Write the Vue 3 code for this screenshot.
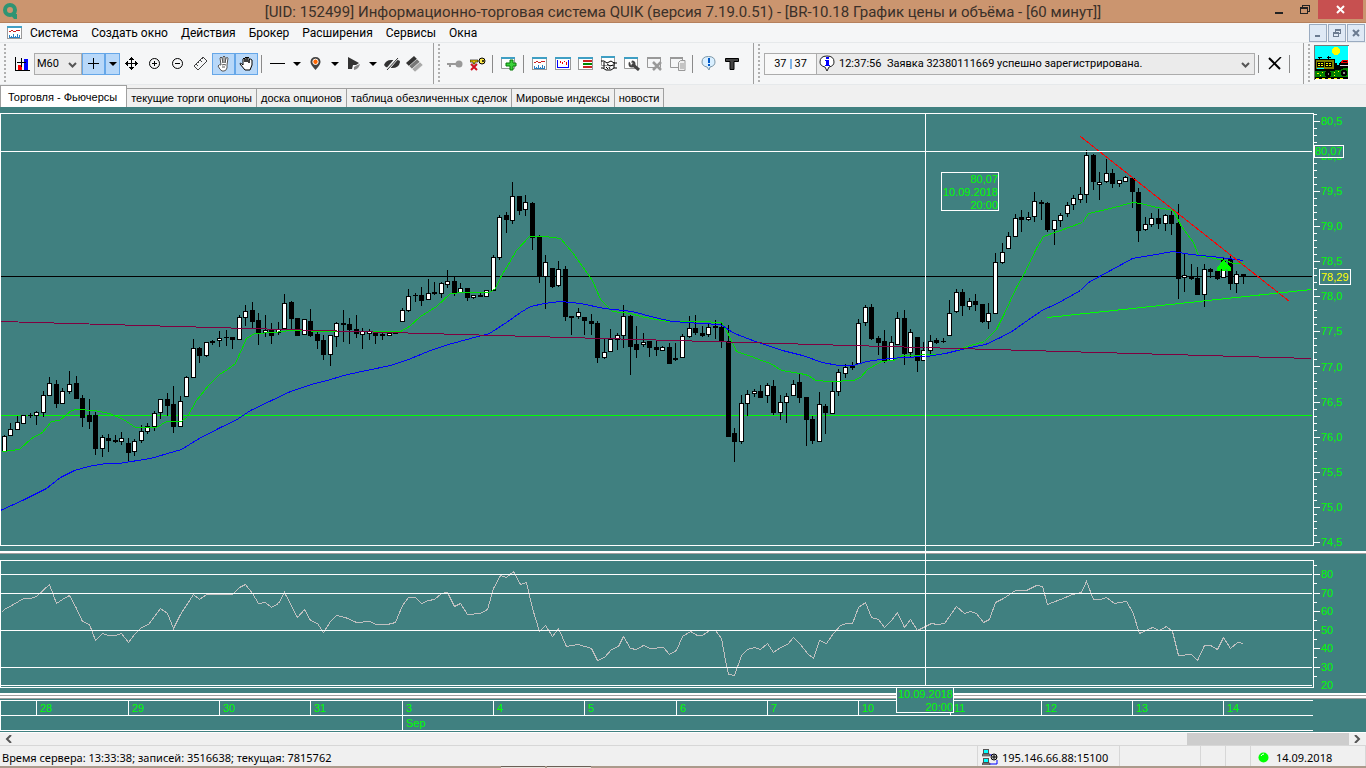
<!-- src/App.vue -->
<template>
  <div class="terminal">
    <header class="title-bar">
      <svg class="app-logo" width="18" height="18" viewBox="0 0 18 18">
        <circle cx="9" cy="8" r="5" fill="none" stroke="#2f9473" stroke-width="4" />
        <path d="M9 12h7v5h-3z" fill="#2f9473" />
      </svg>
      <h1>[UID: 152499] Информационно-торговая система QUIK (версия 7.19.0.51) - [BR-10.18 График цены и объёма - [60 минут]]</h1>
      <div class="window-buttons">
        <button class="win-btn" aria-label="Свернуть">
          <svg width="10" height="12"><path d="M1 8h8v2H1z" fill="#222" /></svg>
        </button>
        <button class="win-btn" aria-label="Восстановить">
          <svg width="12" height="12" fill="none" stroke="#222" shape-rendering="crispEdges"><path d="M1.5 3.5h7v6h-7zM1 4.500h8M3.500 3V1.500h7v6H9" /></svg>
        </button>
        <button class="win-btn win-close" aria-label="Закрыть">
          <svg width="10" height="10" stroke="#fff" stroke-width="2"><path d="M1 1l7 7M8 1l-7 7" /></svg>
        </button>
      </div>
    </header>

    <nav class="menu-bar">
      <svg width="15" height="13" viewBox="0 0 15 13" shape-rendering="crispEdges">
        <path d="M0 0h15v13H0z" fill="#999" /><path d="M1 2h13v10H1z" fill="#fff" /><path d="M0 0h15v2H0z" fill="#3f9fc4" />
        <path d="M2 5.500h2M4 4.500h2M6 5.500h3M9 4.500h4" stroke="#c22" fill="none" /><path d="M2 9h1v2H2zM4 10h1v1H4zM6 8h1v3H6zM8 10h1v1H8zM10 8h1v3h-1zM12 9h1v2h-1zM2 11h11v1H2z" fill="#2a7fc0" />
      </svg>
      <ul>
        <li v-for="item in menu" :key="item"><a href="#">{{ item }}</a></li>
      </ul>
      <div class="child-buttons">
        <button aria-label="Свернуть окно"><svg width="10" height="10"><path d="M2 7h5v2H2z" fill="#6b7b90" /></svg></button>
        <button aria-label="Восстановить окно"><svg width="10" height="10" fill="none" stroke="#6b7b90" shape-rendering="crispEdges"><path d="M1.500 4.500h5v4h-5zM1 5.500h6M3.500 4V1.500h5v4H7M3 2.500h6" /></svg></button>
        <button aria-label="Закрыть окно"><svg width="10" height="10" stroke="#6b7b90" stroke-width="2"><path d="M2 2l6 6M8 2l-6 6" /></svg></button>
      </div>
    </nav>

    <div class="toolbar">
      <div class="group group-chart">
        <button class="tb wide" aria-label="График">
          <svg width="16" height="16" viewBox="0 0 16 16" shape-rendering="crispEdges">
            <path d="M1.500 1v13.500h14.500" fill="none" stroke="#000" /><path d="M10 3h4v11h-4z" fill="#00f" /><path d="M4 9h4v5H4z" fill="#f00" />
            <path d="M3 6.500h9M7.500 2v9" stroke="#000" />
          </svg>
        </button>
        <div class="select-box interval">
          <select v-model="interval" aria-label="Интервал">
            <option>M60</option>
            <option>M30</option>
            <option>M15</option>
          </select>
          <svg class="chevron" width="9" height="6"><path d="M1 1l3.500 3.500L8 1" fill="none" stroke="#555" stroke-width="2" /></svg>
        </div>
        <button class="tb on" aria-label="Перекрестие">
          <svg width="13" height="13" shape-rendering="crispEdges"><path d="M1 6.500h11M6.500 1v11" stroke="#000" /></svg>
        </button>
        <button class="dd on" aria-label="Вид перекрестия"><svg width="8" height="4"><path d="M0 0h8L4 4z" /></svg></button>
        <button class="tb" aria-label="Перемещение">
          <svg width="13" height="13" viewBox="0 0 13 13" shape-rendering="crispEdges">
            <path d="M6.500 1v11M1 6.500h11" stroke="#000" /><path d="M6.500 0l3 3h-6zM6.500 13l3-3h-6zM0 6.500l3-3v6zM13 6.500l-3-3v6z" />
          </svg>
        </button>
        <button class="tb" aria-label="Увеличить">
          <svg width="13" height="13" viewBox="0 0 13 13"><circle cx="6.500" cy="6.500" r="5" fill="none" stroke="#000" /><path d="M4 6.500h5M6.500 4v5" stroke="#000" /></svg>
        </button>
        <button class="tb" aria-label="Уменьшить">
          <svg width="13" height="13" viewBox="0 0 13 13"><circle cx="6.500" cy="6.500" r="5" fill="none" stroke="#000" /><path d="M4 6.500h5" stroke="#000" /></svg>
        </button>
        <button class="tb" aria-label="Линейка">
          <svg width="15" height="15" viewBox="0 0 15 15"><path d="M1 10L10 1l4 4-9 9zM3 8l2 2M5 6l1 1M7 4l2 2M9 2l1 1" fill="none" stroke="#444" /></svg>
        </button>
        <button class="tb on" aria-label="Выбор">
          <svg width="13" height="17" viewBox="0 0 13 17">
            <path d="M4 10L3 3q1-2 2 0l1 5V2q1-2 2 0v6l1-5q2-1 2 0l-1 7v3q-1 3-3 3H5q-2-1-4-5 1-2 3-1z" fill="#fff" stroke="#555" />
            <path d="M5 10q2-1 4 0M5 12h3" fill="none" stroke="#555" />
          </svg>
        </button>
        <button class="tb on" aria-label="Рука">
          <svg width="15" height="15" viewBox="0 0 15 15">
            <path d="M4 9V3q1-2 2 0v3-4q1-2 2 0v4-4q1-2 2 0v5-3q1-2 3 0v5l-2 5H6L1 8q0-2 3 1z" fill="#fff" stroke="#000" />
          </svg>
        </button>
        <span class="sep"></span>
        <button class="tb" aria-label="Линия"><svg width="15" height="3"><path d="M0 1h15v1H0z" /></svg></button>
        <button class="dd" aria-label="Вид линии"><svg width="8" height="4"><path d="M0 0h8L4 4z" /></svg></button>
        <button class="tb" aria-label="Метка">
          <svg width="11" height="13" viewBox="0 0 11 13"><path d="M5.500 13Q0 7 .5 4.500 1 0 5.500 0t5 4.500Q11 7 5.500 13z" fill="#444" /><circle cx="5.500" cy="4.800" r="2.700" fill="#f60" stroke="#fff" /></svg>
        </button>
        <button class="dd" aria-label="Вид метки"><svg width="8" height="4"><path d="M0 0h8L4 4z" /></svg></button>
        <button class="tb" aria-label="Фигура">
          <svg width="14" height="14" viewBox="0 0 14 14"><path d="M1 0l11 6-3 2H6l-1 4H1z" fill="#333" /><path d="M7 13v-3q3-2 6-3-1 5-6 6z" fill="#888" /></svg>
        </button>
        <button class="dd" aria-label="Вид фигуры"><svg width="8" height="4"><path d="M0 0h8L4 4z" /></svg></button>
        <button class="tb" aria-label="Скрыть">
          <svg width="16" height="14" viewBox="0 0 16 14">
            <path d="M0 8q2-5 7-5h3L4 11Q1 10 0 8z" fill="#333" /><path d="M16 5q-1 6-8 6H6l7-8q3 0 3 2z" fill="#333" /><path d="M14 0L2 14" stroke="#f5f6f7" stroke-width="3" /><path d="M14 1L3 13" stroke="#333" />
          </svg>
        </button>
        <button class="tb" aria-label="Слои">
          <svg width="17" height="16" viewBox="0 0 17 16"><path d="M0 7l8-7 3 3-8 7z" fill="#333" /><path d="M3 10l8-7 3 3-8 7z" fill="#777" stroke="#f5f6f7" stroke-width=".5" /><path d="M6 13l8-7 3 3-8 7z" fill="#aaa" stroke="#f5f6f7" stroke-width=".5" /></svg>
        </button>
      </div>

      <div class="group group-tools">
        <button class="tb" aria-label="Соединить">
          <svg width="16" height="10" viewBox="0 0 16 10"><circle cx="12" cy="5" r="3.500" fill="#999" /><path d="M0 4h9v2H4v2H2V6H0z" fill="#999" /></svg>
        </button>
        <button class="tb" aria-label="Разъединить">
          <svg width="16" height="14" viewBox="0 0 16 14">
            <circle cx="12" cy="4" r="3" fill="#ffe94a" stroke="#000" /><path d="M0 3h8v2H5v2H3V5H0z" fill="#e8c800" stroke="#000" stroke-width=".6" /><circle cx="13" cy="4" r="1" />
            <path d="M1 7l6 6M7 7l-6 6" stroke="#d01020" stroke-width="2" />
          </svg>
        </button>
        <span class="sep"></span>
        <button class="tb" aria-label="Создать окно">
          <svg width="16" height="14" viewBox="0 0 16 14">
            <path d="M.5.500h13v11H.5z" fill="#fff" stroke="#999" /><path d="M0 0h14v2H0z" fill="#3f9fc4" /><path d="M9 3h3v3h3v3h-3v4H9V9H5V6h4z" fill="#3bd23b" stroke="#087a08" />
          </svg>
        </button>
        <span class="sep"></span>
        <button class="tb" aria-label="График цены">
          <svg width="15" height="13" viewBox="0 0 15 13" shape-rendering="crispEdges">
            <path d="M0 0h15v13H0z" fill="#999" /><path d="M1 2h13v10H1z" fill="#fff" /><path d="M0 0h15v2H0z" fill="#3f9fc4" />
            <path d="M2 5.500h2M4 4.500h2M6 5.500h3M9 4.500h4" stroke="#c22" fill="none" /><path d="M2 9h1v2H2zM4 10h1v1H4zM6 8h1v3H6zM8 10h1v1H8zM10 8h1v3h-1zM12 9h1v2h-1zM2 11h11v1H2z" fill="#2a7fc0" />
          </svg>
        </button>
        <button class="tb" aria-label="Диаграмма">
          <svg width="16" height="13" viewBox="0 0 16 13" shape-rendering="crispEdges">
            <path d="M0 0h16v13H0z" fill="#999" /><path d="M1 2h14v10H1z" fill="#fff" /><path d="M0 0h16v2H0z" fill="#3f9fc4" />
            <path d="M2.500 3v7.500h11V3" fill="none" stroke="#00f" /><path d="M5.500 4v2M7.500 5v2M9.500 4v1M11.500 5v3" stroke="#e00" />
          </svg>
        </button>
        <button class="tb" aria-label="Стакан">
          <svg width="15" height="13" viewBox="0 0 15 13" shape-rendering="crispEdges">
            <path d="M0 0h15v13H0z" fill="#999" /><path d="M1 2h13v10H1z" fill="#fff" /><path d="M0 0h15v2H0z" fill="#3f9fc4" />
            <path d="M5 3h9v2H5zM5 9h9v2H5z" fill="#c22" /><path d="M5 6h9v2H5z" fill="#080" />
          </svg>
        </button>
        <button class="tb" aria-label="Сделки">
          <svg width="16" height="15" viewBox="0 0 16 15">
            <path d="M.5.500h13v9H.5z" fill="#fff" stroke="#999" /><path d="M0 0h14v2H0z" fill="#3f9fc4" />
            <path d="M0 5h3l3 2 4-2 3 2h3M0 12h2l3 2h5l3-2h3M3 6v6M13 6v6M6 8l3 2 3-1M5 11l2 2M8 11l1 2" fill="none" stroke="#000" />
          </svg>
        </button>
        <button class="tb" aria-label="Настройка">
          <svg width="16" height="14" viewBox="0 0 16 14">
            <path d="M.5.500h13v11H.5z" fill="#fff" stroke="#999" /><path d="M0 0h14v2H0z" fill="#3f9fc4" /><path d="M8 7l7 6" stroke="#444" stroke-width="3" /><circle cx="8" cy="7" r="2.500" fill="none" stroke="#444" stroke-width="2" /><path d="M4 3h4l-1 4z" fill="#fff" />
          </svg>
        </button>
        <button class="tb" aria-label="Удалить">
          <svg width="16" height="14" viewBox="0 0 16 14"><path d="M.5 1.500h13v9H.5z" fill="none" stroke="#999" /><path d="M0 0h14v2H0z" fill="#999" /><path d="M6 5l8 8M14 5l-8 8" stroke="#999" stroke-width="2.500" /></svg>
        </button>
        <button class="tb" aria-label="Таблица">
          <svg width="16" height="14" viewBox="0 0 16 14"><path d="M.5 1.500h12v9H.5z" fill="none" stroke="#999" /><path d="M0 0h13v2H0z" fill="#999" /><path d="M8.500 5.500l2-2h4.500v10H8.500z" fill="#eee" stroke="#999" /><path d="M10 7h4M10 9h4M10 11h4" stroke="#999" /></svg>
        </button>
        <span class="sep"></span>
        <button class="tb" aria-label="Сообщение">
          <svg width="15" height="15" viewBox="0 0 15 15"><path d="M7.500.500q6.500 0 6.500 5.500 0 4-5 5l-1 3-2-3Q1 10 1 6 1 .5 7.500.500z" fill="#d9efff" stroke="#7c97a8" /><path d="M7 2h2v5H7zM7 8h2v2H7z" fill="#0058c8" /></svg>
        </button>
        <button class="tb" aria-label="Текст">
          <svg width="14" height="12" viewBox="0 0 14 12"><path d="M.5.500h13v3H9v8H5v-8H.5z" fill="#444" stroke="#000" /></svg>
        </button>
      </div>

      <div class="group group-message">
        <div class="counter">37<i></i>37</div>
        <div class="select-box message">
          <svg class="info" width="17" height="17" viewBox="0 0 17 17">
            <path d="M8 1q7 0 7 6 0 4-5 5l-2 4-2-4Q1 11 1 7q0-6 7-6z" fill="#fff" stroke="#222" /><path d="M7 2h3v2H7zM6 5h4v5h1v1H6v-1h1V6H6z" fill="#00f" />
          </svg>
          <select aria-label="Сообщения">
            <option>12:37:56&nbsp; Заявка 32380111669 успешно зарегистрирована.</option>
          </select>
          <svg class="chevron" width="9" height="6"><path d="M1 1l3.500 3.500L8 1" fill="none" stroke="#555" stroke-width="2" /></svg>
        </div>
        <span class="sep"></span>
        <button class="tb" aria-label="Очистить">
          <svg width="14" height="13" viewBox="0 0 14 13"><path d="M1 1l11 11" stroke="#000" stroke-width="2" /><path d="M13 0L1 12" stroke="#000" stroke-width="1.500" /></svg>
        </button>
        <span class="sep"></span>
      </div>

      <div class="group group-logo">
        <svg class="caravan" width="35" height="35" viewBox="0 0 35 35" shape-rendering="crispEdges">
          <path d="M0 0h35v35H0z" fill="#fff" /><path d="M0 0h35v1H1v34H0z" fill="#777" />
          <path d="M1 1h33v20H1z" fill="#0ff" /><path d="M1 22h33v12H1z" fill="#008000" />
          <circle cx="22" cy="6" r="4" fill="#ff0" />
          <path d="M1 14h20v12H1z" fill="#000" /><path d="M2 15h18v9H2z" fill="#808000" />
          <path d="M3 17h7v5H3zM11 17h7v5h-7z" fill="#000" /><path d="M4 18h2v1H4zM7 18h2v1H7zM4 20h2v1H4zM7 20h2v1H7zM12 18h2v1h-2zM15 18h2v1h-2zM12 20h2v1h-2zM15 20h2v1h-2z" fill="#ff0" />
          <path d="M3 23h7v1H3z" fill="#0ff" /><path d="M4 12h4v1H4zM5 13h1v1H5zM13 12h4v1h-4zM14 11h1v3H14z" />
          <path d="M21 18h2v2h2v-2l3-3h6v8h-4l-4 2h-5z" fill="#000" /><path d="M28 15h6v3h-7z" fill="#e00" /><path d="M29 16h4v1h-4z" fill="#000" /><path d="M26 20h8v1h-8z" fill="#ddd" />
          <circle cx="14" cy="29" r="3" /><circle cx="30" cy="28" r="3" /><path d="M14 28h1v2h-1zM29 27h2v2h-2z" fill="#888" />
          <path d="M3 28h2v1H3zM8 27h1v1H8zM6 30h1v1H6zM20 30h1v1h-1zM24 26h1v1h-1zM20 27h1v1h-1z" fill="#ff0" />
          <path d="M1 32h33v2H1z" /><path d="M2 33h3v1H2zM8 33h3v1H8zM14 33h3v1h-3zM20 33h3v1h-3zM26 33h3v1h-3z" fill="#ff0" />
        </svg>
      </div>
    </div>

    <div class="tabs" role="tablist">
      <button
        v-for="(tab, i) in tabs"
        :key="tab"
        role="tab"
        :aria-selected="i === activeTab"
        :class="{ active: i === activeTab }"
        @click="activeTab = i"
      >{{ tab }}</button>
    </div>

    <main class="charts">
      <section class="panel price-panel">
        <svg class="plot" viewBox="0 113 1314 433" preserveAspectRatio="none" shape-rendering="crispEdges">
          <rect x="0" y="276" width="1312" height="1" fill="#000" />
          <rect x="0" y="415" width="1312" height="1" fill="#00ff00" />
          <g v-for="(c, i) in candles" :key="i">
            <rect :x="candleX(i)" :y="c[0]" width="1" :height="c[3] - c[0]" fill="#000" />
            <rect :x="candleX(i) - 2" :y="c[1]" width="5" :height="c[2] - c[1]" fill="#000" />
            <rect v-if="c[4]" :x="candleX(i) - 1" :y="c[1] + 1" width="3" :height="c[2] - c[1] - 2" fill="#fff" />
          </g>
          <g fill="none" transform="translate(.5 .5)">
            <polyline :points="maFast" stroke="#00e000" />
            <polyline :points="maSlow" stroke="#0000ff" />
            <path d="M0 321L1311 358" stroke="#800040" />
            <path d="M1080 136L1289 301" stroke="#ff0000" />
            <path d="M1047 317L1311 289" stroke="#00ff00" />
          </g>
          <path d="M1223 260h1l7 8v3h-4v-2h-1v2h-4v-2h-1v2h-4v-3z" fill="#00ff00" />
          <rect x="0" y="151" width="1312" height="1" fill="#fff" />
        </svg>
        <div class="axis">
          <svg viewBox="0 113 52 433" preserveAspectRatio="none" shape-rendering="crispEdges">
            <rect v-for="n in 62" :key="n" x="0" :y="Math.round(107 + n * 7.013)" :width="n % 5 === 2 ? 6 : 3" height="1" fill="#fff" />
          </svg>
          <ul class="price-labels">
            <li v-for="p in priceLabels" :key="p">{{ p }}</li>
          </ul>
          <span class="mark cursor-mark">80,07</span>
          <span class="mark last-mark">78,29</span>
        </div>
        <div class="tip cursor-tip">80,07<br>10.09.2018<br>20:00</div>
      </section>

      <div class="splitter"></div>

      <section class="panel rsi-panel">
        <svg class="plot" viewBox="0 560 1314 128" preserveAspectRatio="none" shape-rendering="crispEdges">
          <polyline :points="rsi" fill="none" stroke="#c0c0c0" transform="translate(.5 .5)" />
          <rect v-for="y in [574, 593, 630, 667, 685]" :key="y" x="0" :y="y" width="1312" height="1" fill="#fff" />
        </svg>
        <div class="axis">
          <svg viewBox="0 560 52 128" preserveAspectRatio="none" shape-rendering="crispEdges">
            <rect v-for="n in 13" :key="n" x="0" :y="Math.round(555.5 + n * 9.25)" :width="n % 2 ? 3 : 6" height="1" fill="#fff" />
          </svg>
          <ul class="rsi-labels">
            <li v-for="n in [80, 70, 60, 50, 40, 30, 20]" :key="n">{{ n }}</li>
          </ul>
        </div>
      </section>

      <div class="cross-line"></div>

      <div class="splitter"></div>
      <div class="splitter"></div>

      <section class="dates">
        <div class="days" :style="{ gridTemplateColumns: dayColumns }">
          <span v-for="d in days" :key="d.label">{{ d.label }}</span>
        </div>
        <div class="months">
          <span></span>
          <span>Sep</span>
        </div>
        <div class="tip time-tip">10.09.2018<br>20:00</div>
      </section>
    </main>

    <div class="hscroll">
      <button aria-label="Назад"><svg width="7" height="8"><path d="M6 0L2 4l4 4" fill="none" stroke="#555" stroke-width="2" /></svg></button>
      <div class="track"><div class="thumb"></div></div>
      <button aria-label="Вперёд"><svg width="7" height="8"><path d="M1 0l4 4-4 4" fill="none" stroke="#555" stroke-width="2" /></svg></button>
    </div>

    <footer class="status-bar">
      <span class="server-time">Время сервера: 13:33:38; записей: 3516638; текущая: 7815762</span>
      <span class="cell address">
        <svg width="17" height="16" viewBox="0 0 17 16">
          <path d="M1 0h6v5H1zM1 9h6v5H1z" fill="#555" /><path d="M2 1h4v3H2zM2 10h4v3H2z" fill="#0ff" /><path d="M0 5h8v2H0zM0 14h8v2H0z" fill="#888" stroke="#222" stroke-width=".5" />
          <path d="M8 6h4M8 15h7v-4" fill="none" stroke="#00f" /><circle cx="12" cy="8" r="3" fill="#ccc" stroke="#000" /><path d="M10 8h5M12 6v4" stroke="#000" />
        </svg>
        195.146.66.88:15100
      </span>
      <span class="cell blank"></span>
      <span class="cell small"></span>
      <span class="cell small"></span>
      <span class="cell date">
        <svg width="11" height="11"><circle cx="5.500" cy="5.500" r="5" fill="#00ff00" /><path d="M3 4q1-2 3-2" stroke="#fff" fill="none" /></svg>
        14.09.2018
      </span>
    </footer>
    <div class="desktop-edge"><i></i><i></i></div>
  </div>
</template>

<script setup>
import { ref, computed } from 'vue';

const menu = ['Система', 'Создать окно', 'Действия', 'Брокер', 'Расширения', 'Сервисы', 'Окна'];
const tabs = [
  'Торговля - Фьючерсы',
  'текущие торги опционы',
  'доска опционов',
  'таблица обезличенных сделок',
  'Мировые индексы',
  'новости'
];
const activeTab = ref(0);
const interval = ref('M60');

const priceLabels = [];
for (let p = 80.5; p >= 74.5; p -= 0.5) {
  priceLabels.push(p.toFixed(1).replace('.', ','));
}

const days = [
  { label: '', w: 36 }, { label: '28', w: 92 }, { label: '29', w: 91 }, { label: '30', w: 91 },
  { label: '31', w: 92 }, { label: '3', w: 91 }, { label: '4', w: 91 }, { label: '5', w: 92 },
  { label: '6', w: 91 }, { label: '7', w: 91 }, { label: '10', w: 92 }, { label: '11', w: 91 },
  { label: '12', w: 91 }, { label: '13', w: 91 }, { label: '14', w: 90 }
];
const dayColumns = computed(() => days.map(d => `minmax(0, ${d.w}fr)`).join(' '));

const candleX = (i) => Math.floor(4.3 + i * 6.521);

// high, body top, body bottom, low, 1 = rising
const candles = [
  [435, 436, 452, 452, 1], [423, 429, 436, 436, 1], [416, 422, 430, 430, 1], [415, 415, 424, 424, 1], [413, 415, 416, 418, 0],
  [411, 412, 416, 425, 1], [391, 395, 413, 417, 1], [377, 383, 396, 396, 1], [380, 384, 404, 408, 0], [388, 391, 404, 404, 1],
  [371, 384, 392, 394, 1], [376, 383, 399, 399, 0], [395, 398, 418, 427, 0], [399, 415, 422, 429, 0], [412, 415, 449, 455, 0],
  [435, 437, 449, 457, 1], [434, 438, 441, 452, 0], [435, 440, 442, 443, 0], [432, 438, 442, 445, 1], [438, 443, 453, 461, 0],
  [439, 441, 452, 456, 1], [425, 431, 441, 443, 1], [423, 426, 432, 434, 1], [411, 413, 427, 431, 1], [399, 399, 413, 419, 1],
  [393, 399, 406, 416, 0], [386, 404, 427, 433, 0], [396, 401, 427, 427, 1], [376, 377, 397, 397, 1], [339, 348, 378, 378, 1],
  [347, 348, 356, 363, 0], [342, 342, 356, 357, 1], [340, 341, 343, 345, 0], [331, 338, 341, 347, 1], [330, 337, 338, 346, 0],
  [337, 337, 340, 349, 0], [315, 317, 340, 340, 1], [305, 311, 318, 326, 1], [302, 310, 322, 329, 0], [313, 320, 333, 345, 0],
  [315, 330, 333, 337, 1], [323, 329, 336, 344, 0], [322, 329, 333, 335, 1], [294, 303, 329, 329, 1], [301, 302, 319, 329, 0],
  [318, 318, 336, 336, 0], [319, 319, 335, 335, 1], [309, 321, 336, 337, 0], [331, 334, 341, 349, 0], [335, 340, 355, 360, 0],
  [335, 335, 355, 366, 1], [322, 323, 337, 347, 1], [310, 323, 325, 342, 0], [318, 324, 330, 344, 0], [315, 329, 334, 338, 0],
  [328, 331, 335, 349, 1], [329, 331, 334, 340, 1], [332, 332, 336, 344, 0], [332, 334, 336, 340, 0], [332, 333, 336, 336, 1],
  [333, 333, 334, 334, 0], [308, 310, 322, 322, 1], [289, 296, 311, 312, 1], [293, 295, 296, 302, 0], [287, 295, 301, 306, 0],
  [279, 293, 300, 300, 1], [282, 292, 294, 295, 0], [282, 283, 294, 298, 1], [270, 281, 285, 288, 1], [277, 281, 294, 296, 0],
  [283, 288, 293, 293, 1], [288, 288, 298, 301, 0], [295, 295, 298, 299, 1], [293, 295, 297, 297, 0], [290, 290, 297, 297, 1],
  [255, 257, 291, 291, 1], [215, 217, 258, 260, 1], [212, 215, 220, 233, 0], [182, 196, 221, 224, 1], [196, 196, 211, 215, 0],
  [195, 202, 210, 216, 1], [202, 203, 238, 250, 0], [235, 237, 277, 283, 0], [255, 262, 277, 309, 1], [268, 268, 287, 288, 0],
  [261, 269, 286, 287, 1], [266, 269, 317, 321, 0], [316, 316, 318, 335, 0], [308, 312, 317, 319, 1], [317, 317, 321, 335, 0],
  [314, 321, 324, 335, 0], [321, 323, 358, 363, 0], [339, 352, 358, 359, 1], [329, 339, 352, 352, 1], [333, 335, 340, 350, 1],
  [305, 316, 336, 348, 1], [315, 316, 347, 375, 0], [326, 344, 350, 358, 0], [333, 342, 345, 347, 1], [341, 341, 348, 357, 0],
  [341, 347, 350, 356, 0], [346, 347, 351, 351, 1], [343, 347, 364, 364, 0], [343, 358, 360, 361, 0], [334, 336, 358, 358, 1],
  [316, 328, 337, 338, 1], [315, 328, 333, 335, 0], [326, 333, 336, 337, 0], [324, 327, 335, 337, 1], [320, 326, 328, 339, 0],
  [322, 327, 341, 348, 0], [325, 341, 437, 437, 0], [428, 433, 442, 462, 0], [395, 403, 442, 444, 1], [390, 394, 404, 416, 1],
  [389, 391, 394, 397, 1], [385, 391, 398, 398, 0], [383, 385, 396, 403, 1], [380, 386, 413, 415, 0], [395, 402, 413, 420, 1],
  [393, 396, 403, 423, 1], [380, 384, 396, 396, 1], [374, 382, 398, 403, 0], [397, 397, 420, 446, 0], [416, 419, 441, 444, 0],
  [392, 404, 442, 442, 1], [404, 406, 413, 434, 0], [382, 391, 414, 414, 1], [369, 372, 392, 396, 1], [364, 367, 374, 378, 1],
  [362, 366, 368, 370, 0], [319, 323, 364, 364, 1], [305, 307, 323, 326, 1], [304, 307, 339, 340, 0], [336, 338, 343, 355, 0],
  [330, 341, 361, 363, 0], [336, 342, 361, 361, 1], [312, 318, 345, 345, 1], [310, 318, 354, 365, 0], [329, 332, 353, 358, 1],
  [337, 337, 361, 372, 0], [342, 350, 361, 361, 1], [335, 341, 351, 354, 1], [338, 340, 343, 344, 0], [338, 341, 342, 343, 0],
  [300, 313, 336, 336, 1], [289, 292, 312, 313, 1], [289, 292, 306, 316, 0], [298, 301, 307, 310, 1], [294, 301, 305, 311, 0],
  [304, 304, 322, 323, 0], [303, 313, 322, 329, 1], [253, 262, 314, 314, 1], [243, 252, 263, 264, 1], [232, 236, 249, 249, 1],
  [214, 218, 237, 237, 1], [210, 217, 220, 232, 0], [212, 217, 220, 221, 1], [192, 201, 217, 222, 1], [200, 202, 204, 220, 0],
  [202, 203, 230, 232, 0], [220, 220, 230, 245, 1], [213, 215, 221, 227, 1], [202, 205, 214, 217, 1], [195, 198, 205, 210, 1],
  [187, 194, 200, 203, 1], [150, 155, 195, 203, 1], [154, 155, 182, 190, 0], [172, 182, 185, 200, 1], [159, 173, 182, 183, 1],
  [169, 173, 184, 188, 0], [180, 180, 184, 187, 1], [176, 177, 182, 182, 1], [177, 178, 192, 208, 0], [188, 192, 231, 242, 0],
  [217, 224, 230, 231, 1], [213, 218, 225, 227, 1], [209, 218, 224, 229, 0], [214, 215, 224, 231, 1], [211, 215, 224, 235, 0],
  [204, 223, 279, 299, 0], [253, 275, 278, 292, 1], [264, 276, 279, 280, 0], [267, 278, 295, 295, 0], [264, 269, 295, 307, 1],
  [268, 269, 272, 278, 0], [271, 271, 279, 280, 0], [258, 260, 278, 278, 1], [256, 259, 284, 290, 0], [271, 274, 284, 293, 1],
  [274, 274, 276, 284, 0]
];

const maFast = `2,451 19,449 31,438 42,432 51,421 59,420 71,410 77,409 94,410 109,413 123,419 135,427 156,427
  166,421 181,421 187,416 196,400 208,385 219,374 227,369 235,363 246,338 254,333 273,332 290,330 330,331
  400,331 409,326 420,316 436,306 450,293 464,292 489,292 495,288 501,275 508,264 516,250 529,236 544,236
  560,238 572,252 592,280 600,299 612,311 630,313 640,316 667,321 700,321 721,322 727,332 736,351 751,356
  761,360 770,363 781,370 800,373 808,375 815,380 830,381 853,380 860,377 867,369 881,361 893,360 902,355
  938,354 950,352 970,345 984,341 996,329 1004,313 1016,287 1024,273 1036,248 1043,236 1060,230 1082,222
  1088,213 1110,208 1132,202 1141,203 1152,206 1173,210 1181,226 1193,242 1198,255 1225,260 1233,263 1243,263`;

const maSlow = `0,510 22,500 46,488 60,477 74,470 88,466 105,463 118,463 150,458 181,449 197,439 220,427 235,420
  250,410 271,400 290,391 311,384 330,379 347,374 390,365 408,359 430,350 448,344 470,338 489,333 506,322
  520,312 530,306 544,303 560,301 580,303 604,308 632,311 654,317 672,321 700,323 720,324 734,333 755,341
  782,350 802,355 822,362 838,365 853,365 866,361 880,359 902,357 926,356 945,353 957,350 970,347 985,344
  1000,337 1013,330 1024,322 1043,309 1055,304 1080,290 1088,282 1110,270 1132,258 1150,255 1172,251
  1190,254 1220,257 1243,260`;

const rsi = `1,612 4,609 13,604 23,598 30,598 36,596 49,584 56,603 62,599 69,595 76,608 82,621 89,624 95,640
  102,633 108,635 115,635 121,633 128,642 134,634 141,627 148,624 160,608 167,613 173,628 180,614 193,594
  199,599 206,594 232,594 239,587 245,584 252,593 258,603 265,602 271,607 278,603 284,592 297,617 304,609
  310,620 317,623 323,632 330,621 336,615 345,617 356,622 369,621 376,624 387,624 395,622 402,605 408,597
  415,597 421,603 428,600 434,599 441,593 447,592 454,606 460,603 467,614 480,613 487,609 493,588 500,575
  506,577 513,571 520,584 526,582 532,608 539,631 545,625 552,636 558,628 566,646 578,644 591,648 597,660
  604,657 611,649 618,646 623,636 630,648 636,649 643,645 650,648 663,647 669,654 676,650 682,636 690,631
  697,635 702,635 709,630 715,630 721,638 725,660 728,674 734,675 741,655 747,649 754,647 760,649 767,643
  773,652 780,647 787,644 793,637 800,644 807,653 813,658 819,640 826,643 833,633 840,625 846,623 852,623
  858,607 865,602 871,617 878,619 884,627 891,620 897,612 904,627 910,619 917,630 925,626 931,623 937,624
  944,623 956,606 964,613 970,611 976,613 983,622 989,619 995,602 1003,598 1015,590 1026,590 1036,585
  1042,586 1047,604 1060,599 1072,594 1081,592 1086,581 1093,599 1100,599 1106,597 1114,603 1126,601
  1132,611 1139,633 1152,627 1159,630 1166,626 1172,631 1178,655 1191,654 1197,660 1204,645 1210,645
  1217,649 1223,637 1230,648 1237,642 1243,643`;
</script>

<style>
html, body { margin: 0; height: 100%; overflow: hidden; }
</style>

<style scoped>
* { box-sizing: border-box; }
.terminal {
  display: flex; flex-direction: column; height: 100vh; min-height: 480px;
  background: #f0f0f0; color: #000;
  font-family: Roboto, "Noto Sans", sans-serif; font-size: 12px;
}
button { padding: 0; border: 0; background: none; font: inherit; color: inherit; }
ul { list-style: none; margin: 0; padding: 0; }
svg { display: block; }

.title-bar {
  display: grid; grid-template-columns: 100px 1fr 100px; flex: none; height: 23px;
  background: #cb956f; border-bottom: 1px solid #b5805c;
}
.app-logo { margin: 2px 0 0 1px; }
h1 { margin: 0; font-size: 15px; line-height: 24px; font-weight: 400; color: #3a3029; text-align: center; white-space: nowrap; }
.window-buttons { display: flex; justify-content: flex-end; padding-right: 3px; }
.win-btn { display: flex; align-items: center; justify-content: center; width: 26px; height: 19px; }
.win-close { width: 45px; background: #c75050; }

.menu-bar { display: flex; align-items: center; flex: none; height: 20px; padding-left: 7px; background: #f5f6f7; border-bottom: 1px solid #e6e9eb; }
.menu-bar ul { display: flex; flex: 1; gap: 13px; margin-left: 8px; padding-top: 2px; }
.menu-bar a { color: #000; text-decoration: none; line-height: 17px; }
.child-buttons { display: flex; gap: 1px; padding-right: 1px; }
.child-buttons button { display: flex; align-items: center; justify-content: center; width: 18px; height: 18px; background: #dfe9f5; border: 1px solid #9aabc0; }

.toolbar { display: flex; flex: none; height: 42px; background: #f5f6f7; border-bottom: 1px solid #e6e9eb; font-size: 11px; }
.group { position: relative; display: flex; align-items: center; flex: none; border-right: 1px solid #a0a0a0; }
.group::before { content: ""; position: absolute; left: 4px; top: 1px; bottom: 0; width: 2px; background: repeating-linear-gradient(#b0b0b0 0 2px, transparent 2px 4px); }
.group-chart { width: 434px; padding-left: 10px; }
.group-tools { width: 320px; padding-left: 9px; }
.group-message { flex: 1; padding-left: 10px; padding-right: 9px; }
.group-logo { width: 62px; padding-left: 10px; border-right: 0; align-items: flex-start; padding-top: 2px; }
.tb, .dd { display: flex; align-items: center; justify-content: center; flex: none; width: 23px; height: 22px; }
.tb.wide { width: 24px; }
.dd { width: 15px; }
.on { background: #b8d8f9; border: 1px solid #66a7e8; }
.sep { flex: none; width: 1px; height: 18px; margin: 0 4px 0 3px; background: #8a8a8a; }
.select-box { position: relative; height: 22px; border: 1px solid #acacac; background: #ebebeb; }
.select-box select { appearance: none; width: 100%; height: 20px; padding: 0 2px; border: 0; background: transparent; font: inherit; color: #000; }
.interval { width: 48px; }
.chevron { position: absolute; right: 4px; top: 8px; pointer-events: none; }
.counter { display: flex; align-items: center; justify-content: center; width: 53px; height: 22px; border: 1px solid #acacac; background: #f8f8f8; }
.counter i { width: 2px; height: 10px; margin: 0 3px; background: #7fb3e6; }
.message { flex: 1; margin-left: -1px; }
.message select { padding-left: 22px; }
.info { position: absolute; left: 2px; top: 1px; }

.tabs { display: flex; align-items: flex-end; flex: none; height: 22px; font-family: "Liberation Sans", Arial, sans-serif; font-size: 11px; }
.tabs button { height: 19px; padding: 0 4px; border: 1px solid #a0a0a0; border-bottom: 0; border-left: 0; white-space: nowrap; }
.tabs button.active { height: 22px; padding: 0 9px 0 7px; background: #fff; border-left: 1px solid #a0a0a0; }

.charts { position: relative; display: flex; flex-direction: column; flex: 1; min-height: 0; background: #408080; color: #00ff00; font-family: "Liberation Sans", Arial, sans-serif; font-size: 11px; }
.panel { position: relative; display: flex; min-height: 0; }
.price-panel { flex: 444 1 0; }
.rsi-panel { flex: 139 1 0; }
.plot { flex: 1; min-width: 0; height: calc(100% - 11px); margin-top: 6px; outline: 1px solid #fff; outline-offset: -1px; }
.axis { position: relative; display: grid; flex: none; width: 52px; }
.axis svg { grid-area: 1 / 1; width: 52px; height: calc(100% - 11px); margin-top: 6px; }
.axis ul { grid-area: 1 / 1; display: flex; flex-direction: column; justify-content: space-between; padding-left: 7px; line-height: 12px; }
.price-labels { padding-top: 8px; padding-bottom: 3px; }
.rsi-labels { padding-top: 14px; padding-bottom: 2px; }
.mark { position: absolute; border: 1px solid #fff; background: #408080; }
.cursor-mark { left: 0; top: 38px; line-height: 11px; }
.last-mark { left: 5px; top: 162px; padding: 0 1px; line-height: 14px; color: #ffff00; }
.tip { position: absolute; width: 58px; border: 1px solid #fff; background: #408080; text-align: right; line-height: 13px; }
.cursor-tip { left: 941px; top: 65px; height: 39px; }
.time-tip { left: 896px; top: -12px; height: 26px; }
.cross-line { position: absolute; left: 67.72%; top: 6px; bottom: 46px; width: 1px; background: #fff; }
.splitter { flex: none; height: 3px; background: #fff; border-bottom: 1px solid #a0a0a0; }

.dates { position: relative; flex: none; height: 33px; padding: 1px 53px 1px 0; line-height: 14px; }
.days { display: grid; border-top: 1px solid #fff; height: 15px; }
.days span { border-left: 1px solid #fff; padding-left: 3px; }
.months { display: grid; grid-template-columns: 402fr 911fr; height: 16px; border-top: 1px solid #fff; border-bottom: 1px solid #fff; }
.months span { border-left: 1px solid #fff; padding-left: 3px; }

.hscroll { display: flex; flex: none; height: 13px; border-top: 1px solid #fff; background: #f0f0f0; }
.hscroll button { display: flex; align-items: center; justify-content: center; width: 17px; }
.track { display: flex; flex: 1; justify-content: flex-end; }
.thumb { width: 162px; background: #cdcdcd; }

.status-bar { display: flex; flex: none; height: 21px; border-top: 1px solid #d7d7d7; font-family: "Noto Sans", sans-serif; font-size: 11px; line-height: 23px; white-space: nowrap; }
.server-time { flex: 1; padding-left: 2px; }
.cell { display: flex; align-items: center; flex: none; padding-top: 2px; border-left: 1px solid #d7d7d7; }
.address { width: 142px; padding-left: 4px; gap: 3px; }
.blank { width: 81px; }
.small { width: 25px; }
.date { width: 116px; padding-left: 7px; gap: 7px; border-right: 1px solid #d7d7d7; }
.desktop-edge { display: flex; gap: 2px; flex: none; height: 2px; padding-left: 501px; background: #ab9a8b; }
.desktop-edge i { width: 44px; background: #e8e2dc; border-top: 1px solid #6b5f55; }
</style>
